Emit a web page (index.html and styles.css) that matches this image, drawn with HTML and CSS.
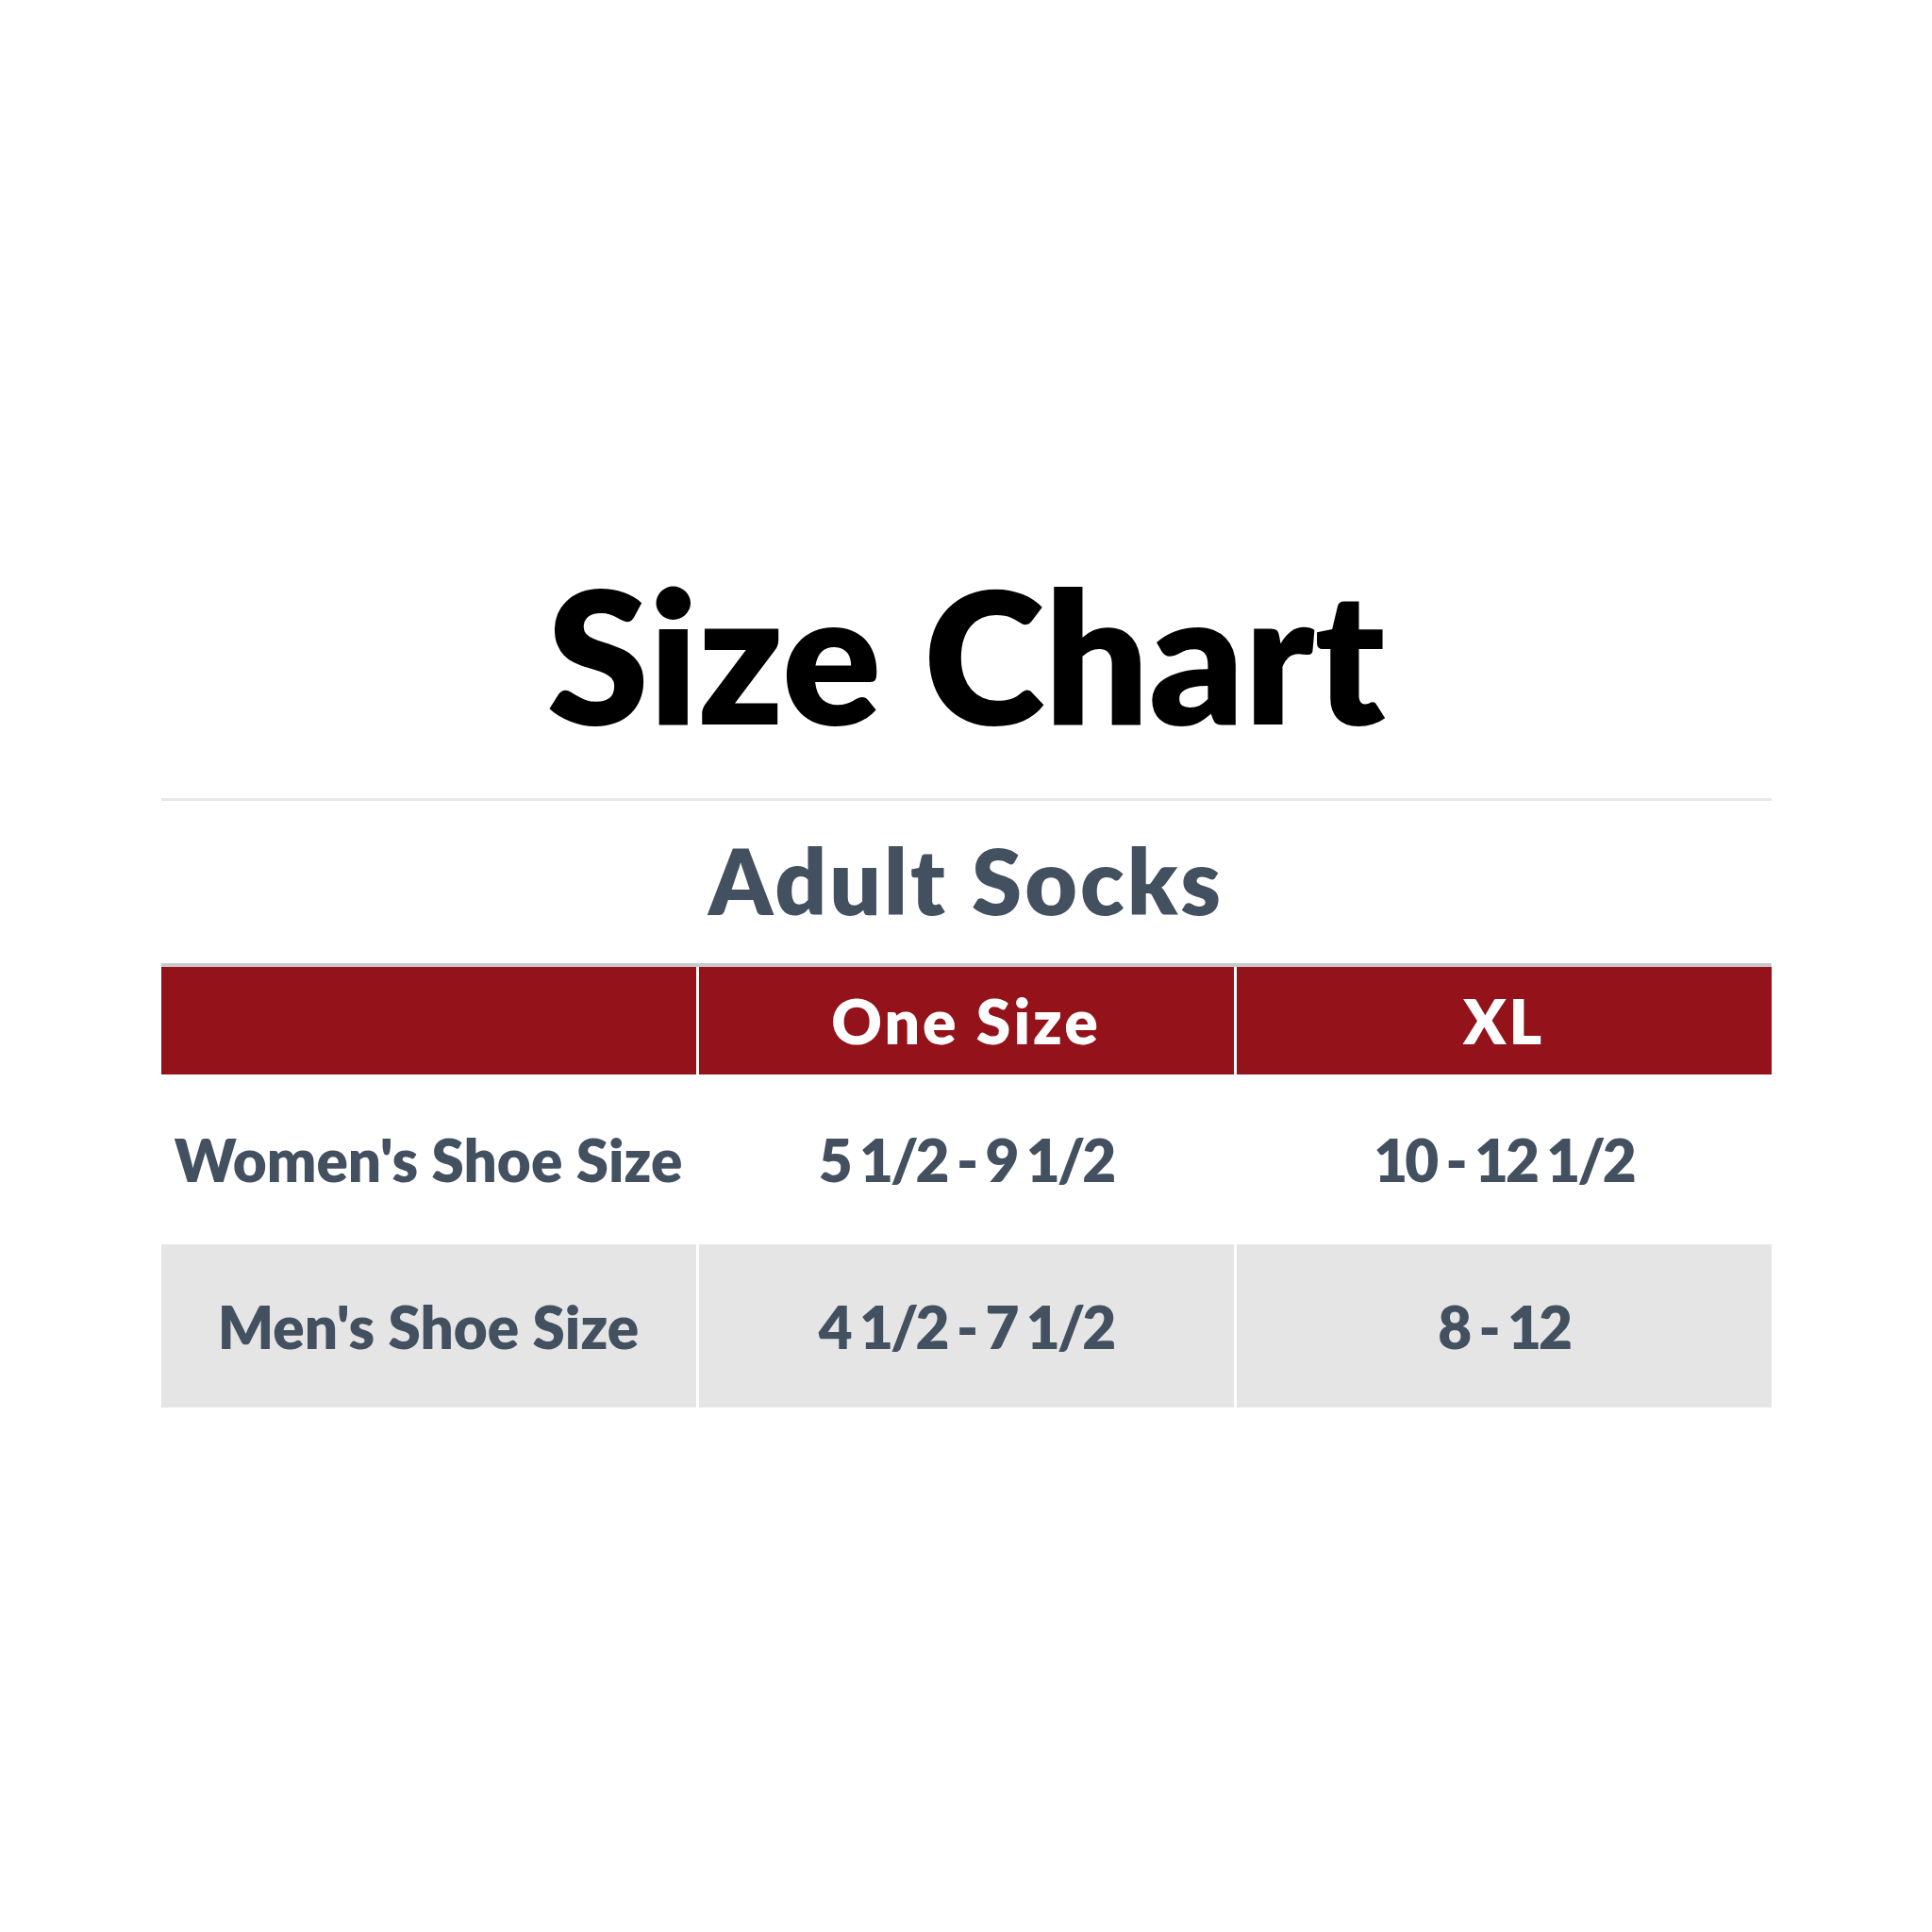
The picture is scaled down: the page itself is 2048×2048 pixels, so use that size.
FILE: index.html
```html
<!DOCTYPE html>
<html lang="en">
<head>
<meta charset="utf-8">
<title>Size Chart</title>
<link rel="stylesheet" href="styles.css">
</head>
<body>
<main class="page">
  <h1 class="title">Size Chart</h1>
  <div class="rule"></div>
  <h2 class="subtitle">Adult Socks</h2>
  <div class="chart">
    <div class="cell head"></div>
    <div class="cell head">One Size</div>
    <div class="cell head">XL</div>

    <div class="cell body label">Women's Shoe Size</div>
    <div class="cell body value">5 1/2 - 9 1/2</div>
    <div class="cell body value">10 - 12 1/2</div>

    <div class="cell body alt label">Men's Shoe Size</div>
    <div class="cell body alt value">4 1/2 - 7 1/2</div>
    <div class="cell body alt value">8 - 12</div>
  </div>
</main>
</body>
</html>
```

FILE: styles.css
```css
html, body {
  margin: 0;
  padding: 0;
  background: #ffffff;
}

.page {
  width: 1707px;
  margin: 0 auto;
  padding-top: 596px;
  font-family: Lato, "Liberation Sans", sans-serif;
}

.title {
  margin: 0;
  font-size: 195px;
  line-height: 1;
  font-weight: 800;
  color: #000000;
  text-align: center;
  height: 250px;
}

.rule {
  height: 3px;
  background: #e8e8e8;
}

.subtitle {
  margin: 36px 0 0;
  font-size: 96px;
  line-height: 1;
  font-weight: 800;
  letter-spacing: 3px;
  color: #435060;
  text-align: center;
  height: 136px;
}

.chart {
  display: grid;
  grid-template-columns: 1fr 1fr 1fr;
  grid-template-rows: 114px 180px 173px;
  column-gap: 3px;
  border-top: 4px solid #c9c9c9;
}

.cell {
  display: flex;
  align-items: center;
  justify-content: center;
  font-weight: 800;
  font-size: 62px;
  line-height: 1;
  white-space: nowrap;
}

.head {
  background: #941219;
  color: #ffffff;
  font-size: 66px;
  letter-spacing: 3px;
}

.body {
  background: #ffffff;
  color: #435060;
}

.value {
  letter-spacing: -3px;
  word-spacing: -1px;
}

.body.alt {
  background: #e5e5e5;
}
```
